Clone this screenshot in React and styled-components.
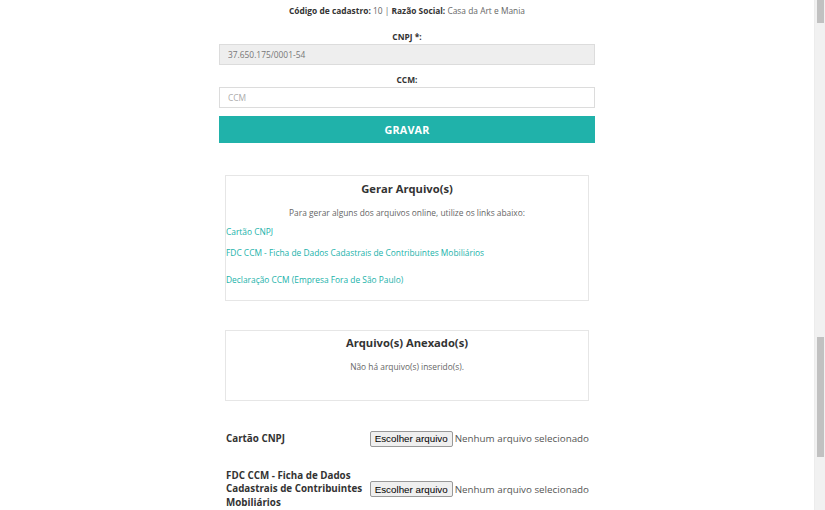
import React from "react";
import styled, { createGlobalStyle } from "styled-components";

const GlobalStyle = createGlobalStyle`
  html, body {
    margin: 0;
    padding: 0;
    background: #fff;
    overflow: hidden;
  }
  body {
    font-family: "Open Sans", "Liberation Sans", sans-serif;
    font-size: 8.4px;
    color: #666;
  }
`;

const Shell = styled.div`
  display: flex;
  width: 825px;
  height: 510px;
  overflow: hidden;
`;

const Main = styled.div`
  flex: 1;
  display: flex;
  flex-direction: column;
  align-items: center;
  padding-top: 5px;
`;

const ScrollTrack = styled.div`
  width: 10px;
  background: #f1f1f1;
  border-left: 1px solid #ececec;
  display: flex;
  flex-direction: column;
  align-items: center;
`;

const ScrollThumb = styled.div`
  width: 7px;
  height: ${p => p.$h}px;
  margin-top: ${p => p.$top}px;
  background: #c1c1c1;
`;

const Form = styled.div`
  width: 376px;
  display: flex;
  flex-direction: column;
`;

const InfoLine = styled.div`
  text-align: center;
  line-height: 12px;
  color: #666;
  b {
    color: #333;
    font-weight: 700;
  }
`;

const Label = styled.div`
  text-align: center;
  font-weight: 700;
  color: #333;
  line-height: 12px;
  margin-top: ${p => p.$top}px;
  margin-bottom: 1px;
`;

const Input = styled.input`
  box-sizing: border-box;
  width: 100%;
  height: 21px;
  padding: 0 8px;
  font-family: "Open Sans", "Liberation Sans", sans-serif;
  font-size: 8.4px;
  color: #777;
  border: 1px solid #dcdcdc;
  background: ${p => (p.disabled ? "#eeeeee" : "#fff")};
  outline: none;
  &::placeholder {
    color: #aaa;
  }
`;

const SaveButton = styled.button`
  margin-top: 8px;
  height: 27px;
  width: 100%;
  border: none;
  background: #20b2aa;
  color: #fff;
  font-family: "Open Sans", "Liberation Sans", sans-serif;
  font-weight: 700;
  font-size: 10.8px;
  letter-spacing: 0.2px;
`;

const Box = styled.div`
  box-sizing: border-box;
  width: 364px;
  margin-top: ${p => p.$top}px;
  height: ${p => p.$h}px;
  border: 1px solid #e6e6e6;
  padding-top: ${p => p.$pt}px;
  display: flex;
  flex-direction: column;
`;

const BoxTitle = styled.div`
  text-align: center;
  font-weight: 700;
  font-size: 11.2px;
  line-height: 15px;
  color: #333;
`;

const BoxText = styled.div`
  text-align: center;
  line-height: 12px;
  color: #666;
  margin-top: ${p => p.$top}px;
`;

const LinkItem = styled.a`
  display: block;
  line-height: 12px;
  color: #20b2aa;
  text-decoration: none;
  margin-top: ${p => p.$top}px;
`;

const FileRow = styled.div`
  width: 364px;
  display: flex;
  align-items: center;
  margin-top: ${p => p.$top}px;
`;

const FileLabel = styled.div`
  width: 145px;
  padding-left: 1px;
  font-weight: 700;
  font-size: 9.8px;
  line-height: 13.8px;
  color: #333;
`;

const FileButton = styled.button`
  box-sizing: border-box;
  height: 16px;
  padding: 0 4px;
  font-family: "Liberation Sans", Arial, sans-serif;
  font-size: 9.8px;
  color: #000;
  background: #efefef;
  border: 1px solid #999;
  border-radius: 2px;
  white-space: nowrap;
`;

const FileStatus = styled.span`
  margin-left: 2px;
  font-size: 9.8px;
  color: #555;
  white-space: nowrap;
`;

const links = [
  { text: "Cartão CNPJ", top: 7 },
  { text: "FDC CCM - Ficha de Dados Cadastrais de Contribuintes Mobiliários", top: 9 },
  { text: "Declaração CCM (Empresa Fora de São Paulo)", top: 15 },
];

export default function App() {
  return (
    <>
      <GlobalStyle />
      <Shell>
        <Main>
          <Form>
            <InfoLine>
              <b>Código de cadastro:</b> 10 | <b>Razão Social:</b> Casa da Art e Mania
            </InfoLine>
            <Label $top={14}>CNPJ *:</Label>
            <Input disabled value="37.650.175/0001-54" readOnly />
            <Label $top={9}>CCM:</Label>
            <Input placeholder="CCM" />
            <SaveButton>GRAVAR</SaveButton>
          </Form>

          <Box $top={32} $h={126} $pt={5}>
            <BoxTitle>Gerar Arquivo(s)</BoxTitle>
            <BoxText $top={11}>Para gerar alguns dos arquivos online, utilize os links abaixo:</BoxText>
            {links.map(l => (
              <LinkItem key={l.text} href="#" $top={l.top}>{l.text}</LinkItem>
            ))}
          </Box>

          <Box $top={29} $h={71} $pt={4}>
            <BoxTitle>Arquivo(s) Anexado(s)</BoxTitle>
            <BoxText $top={11}>Não há arquivo(s) inserido(s).</BoxText>
          </Box>

          <FileRow $top={30}>
            <FileLabel>Cartão CNPJ</FileLabel>
            <FileButton>Escolher arquivo</FileButton>
            <FileStatus>Nenhum arquivo selecionado</FileStatus>
          </FileRow>

          <FileRow $top={22}>
            <FileLabel>FDC CCM - Ficha de Dados Cadastrais de Contribuintes Mobiliários</FileLabel>
            <FileButton>Escolher arquivo</FileButton>
            <FileStatus>Nenhum arquivo selecionado</FileStatus>
          </FileRow>
        </Main>
        <ScrollTrack>
          <ScrollThumb $top={0} $h={23} />
          <ScrollThumb $top={314} $h={120} />
        </ScrollTrack>
      </Shell>
    </>
  );
}
